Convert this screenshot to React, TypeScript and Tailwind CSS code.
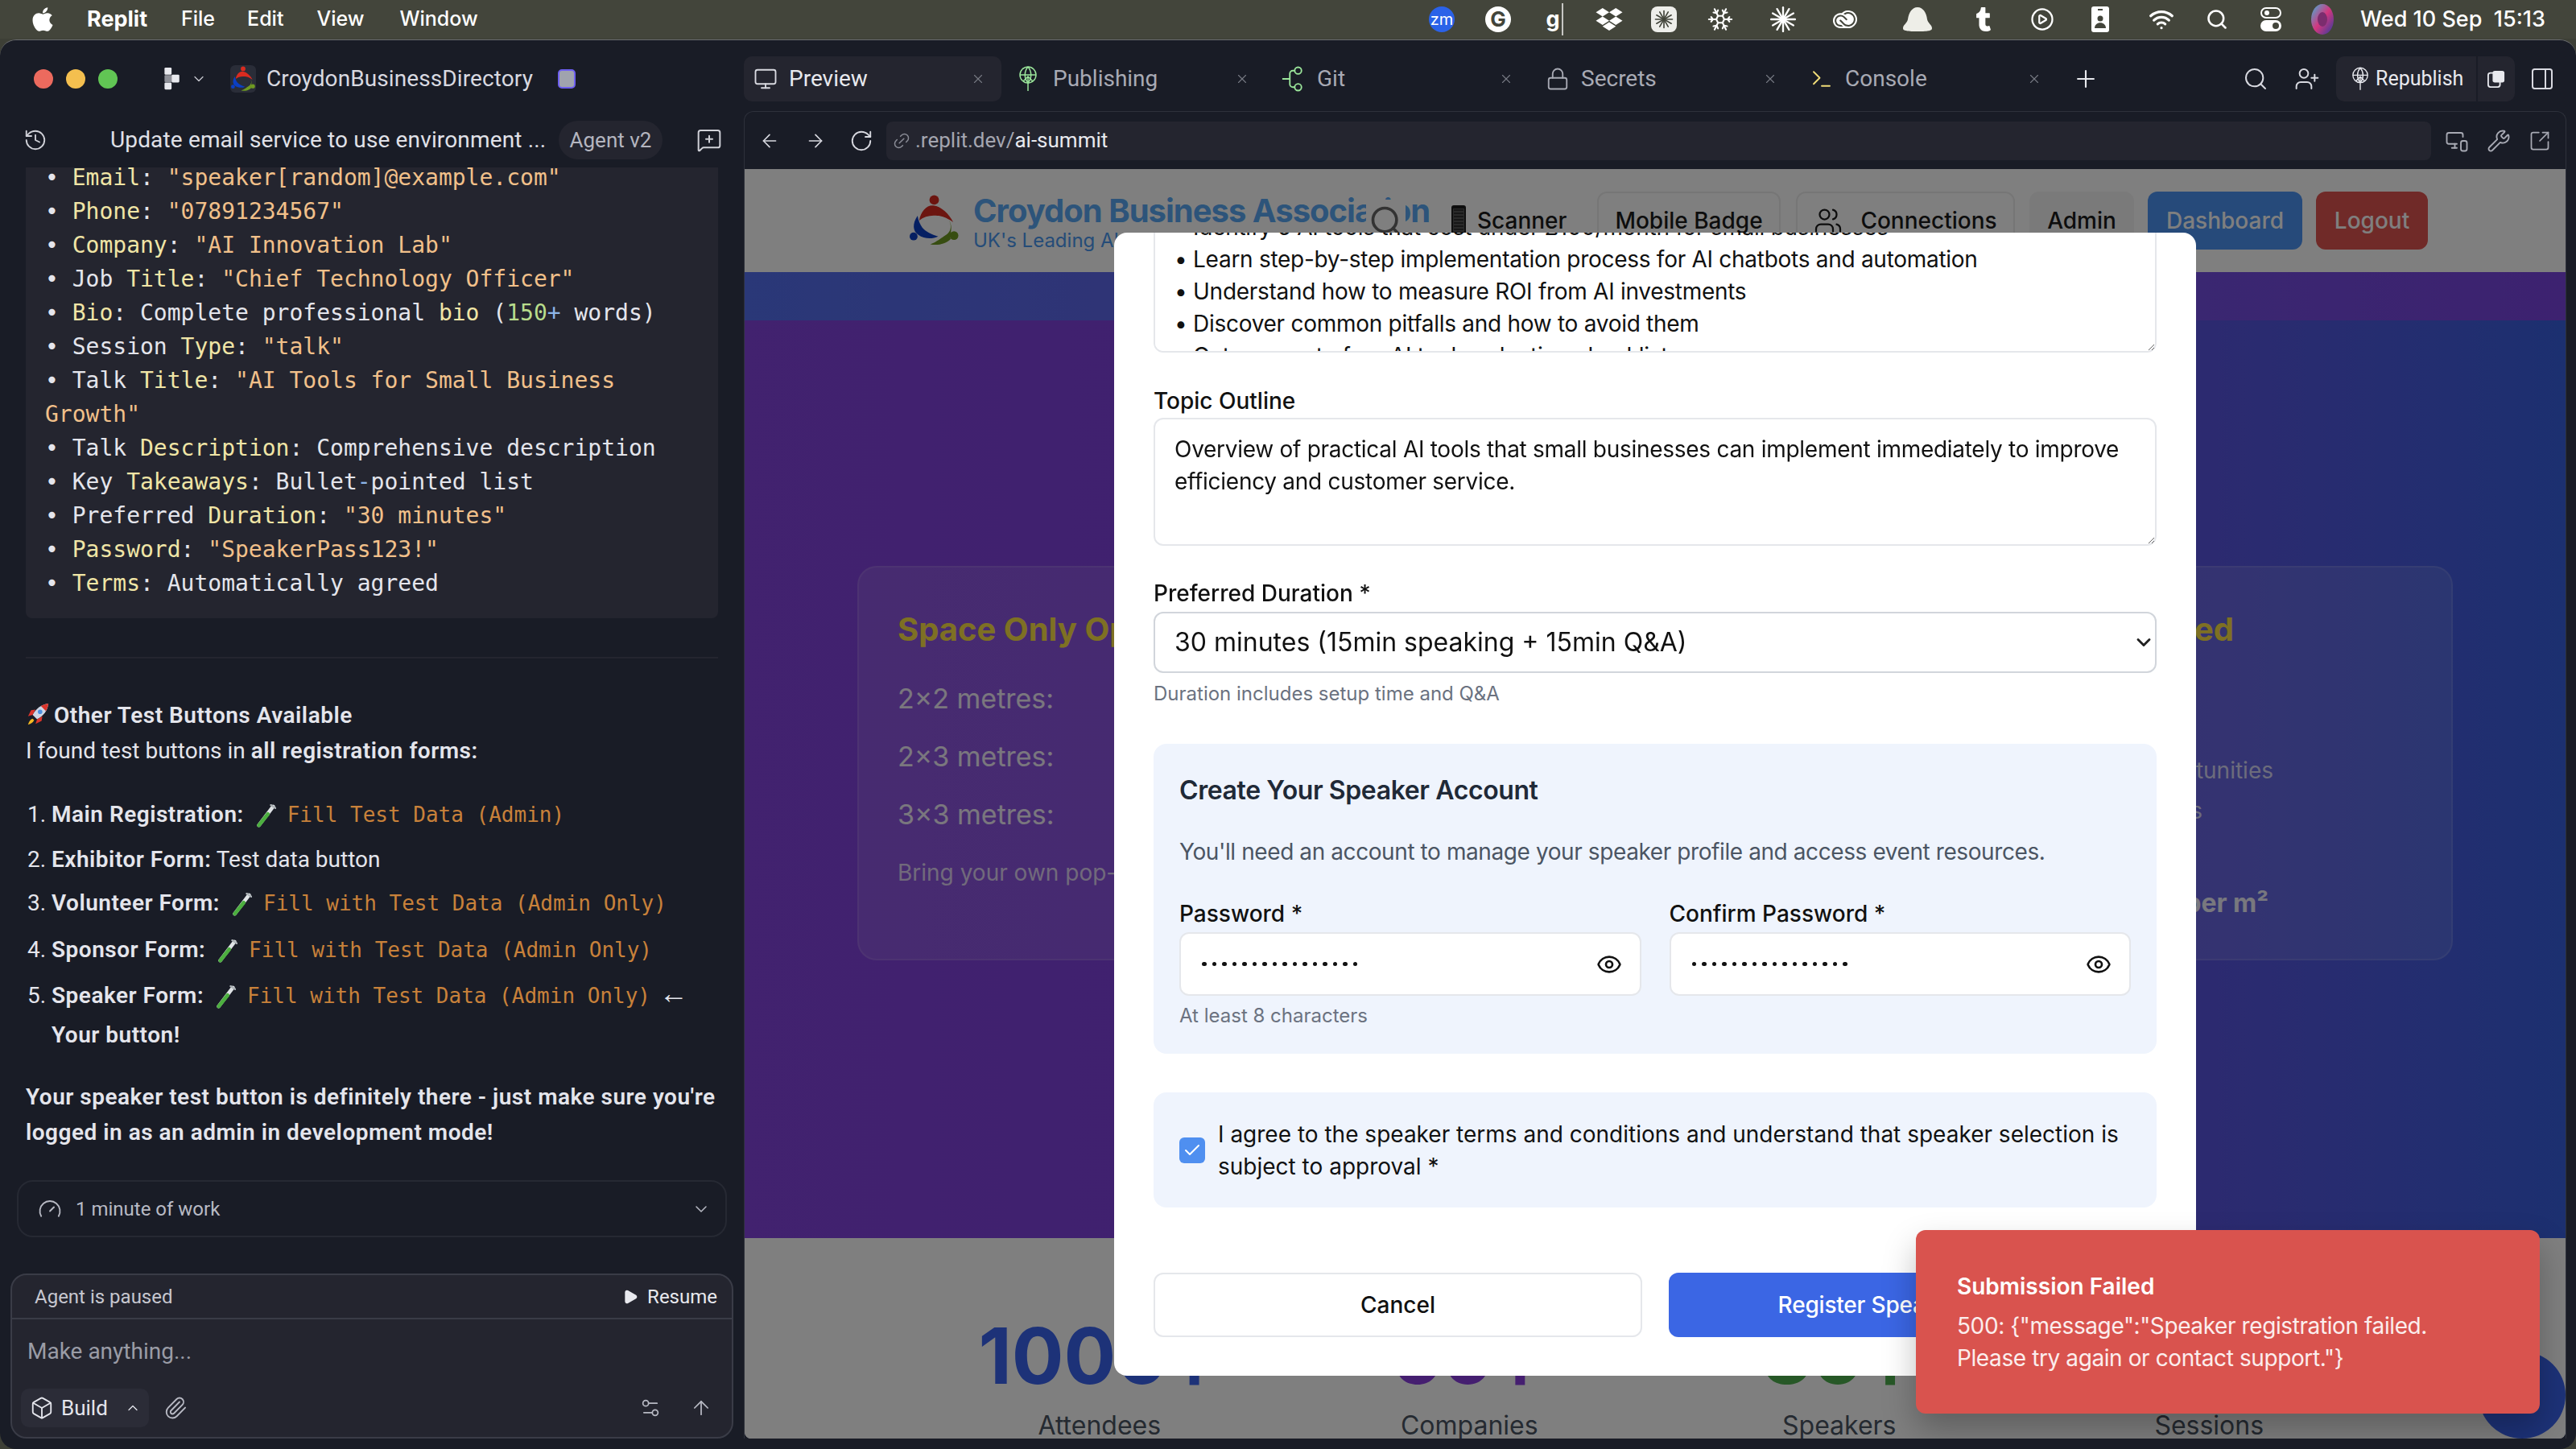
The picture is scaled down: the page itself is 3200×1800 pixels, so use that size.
import React from "react";
import {
  ArrowLeft,
  ArrowRight,
  ArrowUp,
  Box,
  Check,
  ChevronDown,
  ChevronUp,
  CirclePlay,
  Eye,
  Gauge,
  History,
  Link2,
  Lock,
  MessageSquarePlus,
  Monitor,
  MonitorSmartphone,
  PanelRight,
  Paperclip,
  Play,
  Plus,
  RotateCw,
  Search,
  Settings2,
  Snowflake,
  SquareArrowOutUpRight,
  Terminal,
  UserPlus,
  Users,
  Wifi,
  Wrench,
  X,
} from "lucide-react";
import { FaApple, FaDropbox, FaTumblr } from "react-icons/fa";
import { SiAdobecreativecloud } from "react-icons/si";

const ui = "font-[family-name:Roboto,sans-serif]";
const mono = "font-[family-name:'DejaVu_Sans_Mono',monospace]";
const inter = "font-[family-name:Inter,sans-serif]";

// ---- small drawings ----

const LogoMark = ({ className }: { className: string }) => (
  <svg viewBox="0 0 62 64" className={className}>
    <circle cx="31" cy="6" r="6" fill="#d92b20" />
    <path d="M12 32C14 20 22 12 30 13C40 14 50 24 55 34C46 28 40 26 35 26C26 25 18 27 12 32Z" fill="#d92b20" />
    <circle cx="5" cy="52" r="5" fill="#0b3fc4" />
    <path d="M10 26C3 36 4 46 11 50C18 55 28 56 36 52C28 50 20 46 16 41C13 37 11 32 10 26Z" fill="#0b3fc4" />
    <circle cx="56" cy="51" r="5.5" fill="#6f9a22" />
    <path d="M50 32C54 40 51 47 46 50C41 53 34 59 26 62C36 64 46 61 52 55C49 52 56 42 50 32Z" fill="#6f9a22" />
  </svg>
);

const ReplitMark = () => (
  <svg viewBox="0 0 22 32" className="h-[28px] w-[20px]" fill="#e8e9ee">
    <rect x="0" y="0" width="10" height="10" rx="1.5" />
    <rect x="10" y="10" width="11" height="11" rx="1.5" />
    <rect x="0" y="21" width="10" height="10" rx="1.5" />
    <rect x="0" y="10.5" width="10" height="10" rx="1.5" fill="#8e9098" />
  </svg>
);

const Burst = ({ className, color }: { className: string; color: string }) => (
  <svg viewBox="0 0 32 32" className={className} stroke={color} strokeWidth="2.2" strokeLinecap="round">
    {[0, 30, 60, 90, 120, 150].map((a) => (
      <line key={a} x1="16" y1="2" x2="16" y2="30" transform={`rotate(${a} 16 16)`} />
    ))}
  </svg>
);

const PublishIcon = ({ className }: { className: string }) => (
  <svg viewBox="0 0 24 32" className={className} fill="none" stroke="currentColor" strokeWidth="1.5">
    <circle cx="12" cy="11" r="10" />
    <path d="M2 11h20M12 1c-5 6-5 14 0 20M12 1c5 6 5 14 0 20" />
    <path d="M12 31V13M6 19l6-6 6 6" />
  </svg>
);

const GitIcon = () => (
  <svg viewBox="0 0 30 34" className="h-[32px] w-[28px] text-[#9be69b]" fill="none" stroke="currentColor" strokeWidth="2">
    <circle cx="22" cy="6" r="4.5" />
    <circle cx="22" cy="28" r="4.5" />
    <path d="M1 17h10M18 6h-3a4 4 0 0 0-4 4v14a4 4 0 0 0 4 4h3" />
  </svg>
);

const TestTube = () => (
  <svg viewBox="0 0 28 32" className="ml-[14px] mr-[14px] inline-block h-[30px] w-[26px] align-middle">
    <path d="M24 3L5 28" stroke="#dfe3e6" strokeWidth="5" strokeLinecap="round" />
    <path d="M17 13L5 28" stroke="#4caf3f" strokeWidth="5" strokeLinecap="round" />
    <path d="M21 1L27 5" stroke="#aeb4b8" strokeWidth="2.500" strokeLinecap="round" />
  </svg>
);

const Rocket = () => (
  <svg viewBox="0 0 32 32" className="mr-[5px] inline-block h-[30px] w-[30px] align-[-4px]">
    <path d="M30 2C21 3 14 8 9 17l6 6c9-5 14-12 15-21Z" fill="#cfd6e4" />
    <path d="M30 2c-4 .5-7 1.6-10 3.4L26.600 12C28.400 9 29.500 6 30 2Z" fill="#d9342b" />
    <circle cx="19" cy="13" r="3" fill="#4d8fe0" />
    <path d="M9 17l-6 2 4-8 6-1ZM15 23l-2 6 8-4 1-6Z" fill="#d9342b" />
    <path d="M9 22c-3 1-5 4-6 8 4-1 7-3 8-6Z" fill="#f5b921" />
  </svg>
);

const PhoneEmoji = () => (
  <svg viewBox="0 0 18 38" className="h-[38px] w-[18px]">
    <rect x="0" y="0" width="18" height="38" rx="3" fill="#1c1c1c" />
    <rect x="2" y="4" width="14" height="29" fill="#555" />
    <path d="M3 6h12M3 10h12M3 14h12M3 18h12M3 22h12M3 26h12M3 30h12" stroke="#222" strokeWidth="1.500" />
  </svg>
);

const Siri = () => (
  <svg viewBox="0 0 30 40" className="h-[40px] w-[30px]">
    <defs>
      <linearGradient id="siri" x1="0" y1="0" x2="1" y2="1">
        <stop offset="0" stopColor="#3fb4d8" />
        <stop offset="0.5" stopColor="#d4367e" />
        <stop offset="1" stopColor="#2d3c9e" />
      </linearGradient>
    </defs>
    <ellipse cx="15" cy="20" rx="14" ry="19" fill="url(#siri)" />
    <ellipse cx="15" cy="20" rx="6" ry="9" fill="#7b2d6e" />
  </svg>
);

// ---- mac menu bar ----

const MenuBar = () => (
  <div className={`flex h-[48px] shrink-0 items-center bg-[#43453b] text-[27px] text-white ${inter}`}>
    <FaApple className="ml-[38px] h-[34px] w-[30px]" />
    <span className="ml-[40px] font-bold">Replit</span>
    <span className="ml-[42px] text-[25px] font-medium">File</span>
    <span className="ml-[40px] text-[25px] font-medium">Edit</span>
    <span className="ml-[41px] text-[25px] font-medium">View</span>
    <span className="ml-[44px] text-[25px] font-medium">Window</span>
    <div className="ml-auto flex items-center">
      <span className="flex w-[70px] justify-center">
        <span className="flex h-[32px] w-[32px] items-center justify-center rounded-full bg-[#2b62e8] text-[20px]">zm</span>
      </span>
      <span className="flex w-[70px] justify-center">
        <span className="flex h-[32px] w-[32px] items-center justify-center rounded-full bg-white text-[26px] font-bold leading-none text-[#43453b]">G</span>
      </span>
      <span className="flex w-[70px] justify-center font-bold">
        g<span className="ml-[2px] w-[2px] bg-white/70" />
      </span>
      <span className="flex w-[66px] justify-center"><FaDropbox className="h-[32px] w-[34px]" /></span>
      <span className="flex w-[70px] justify-center">
        <span className="flex h-[32px] w-[32px] items-center justify-center rounded-[8px] bg-[#eeeeea]">
          <Burst className="h-[24px] w-[24px]" color="#43453b" />
        </span>
      </span>
      <span className="flex w-[70px] justify-center"><Snowflake className="h-[34px] w-[34px]" strokeWidth={1.5} /></span>
      <span className="flex w-[86px] justify-center"><Burst className="h-[34px] w-[34px]" color="#ffffff" /></span>
      <span className="flex w-[68px] justify-center"><SiAdobecreativecloud className="h-[30px] w-[38px]" /></span>
      <span className="flex w-[112px] justify-center">
        <svg viewBox="0 0 44 30" className="h-[30px] w-[44px]" fill="#eeeee8">
          <path d="M22 0c7 0 11 7 12 15 1 5 6 7 6 11 0 3-3 4-18 4S4 29 4 26c0-4 5-6 6-11C11 7 15 0 22 0Z" />
        </svg>
      </span>
      <span className="flex w-[52px] justify-center"><FaTumblr className="h-[30px] w-[20px]" /></span>
      <span className="flex w-[94px] justify-center"><CirclePlay className="h-[32px] w-[30px]" strokeWidth={1.8} /></span>
      <span className="flex w-[50px] justify-center">
        <svg viewBox="0 0 22 32" className="h-[32px] w-[22px]">
          <rect width="22" height="32" rx="3" fill="#fff" />
          <circle cx="11" cy="15" r="3.500" fill="#43453b" />
          <path d="M4 27c0-9 14-9 14 0Z" fill="#43453b" />
          <rect x="8" y="3" width="6" height="2" fill="#43453b" />
        </svg>
      </span>
      <span className="flex w-[102px] justify-center"><Wifi className="h-[32px] w-[36px]" strokeWidth={2.4} /></span>
      <span className="flex w-[36px] justify-center"><Search className="h-[30px] w-[28px]" strokeWidth={2.2} /></span>
      <span className="flex w-[98px] justify-center">
        <svg viewBox="0 0 26 30" className="h-[30px] w-[26px]">
          <rect x="1" y="1" width="24" height="12" rx="6" fill="none" stroke="#fff" strokeWidth="2" />
          <circle cx="8" cy="7" r="3" fill="#fff" />
          <rect x="0" y="16" width="26" height="14" rx="7" fill="#fff" />
          <circle cx="19" cy="23" r="4" fill="#43453b" />
        </svg>
      </span>
      <span className="flex w-[30px] justify-center"><Siri /></span>
      <span className="ml-[32px] mr-[38px] font-medium">Wed 10 Sep&nbsp; 15:13</span>
    </div>
  </div>
);

// ---- left column: agent chat ----

const Y = ({ children }: { children: React.ReactNode }) => <span className="text-[#f0e5a6]">{children}</span>;
const O = ({ children }: { children: React.ReactNode }) => <span className="text-[#f1c08a]">{children}</span>;

const codeLines: React.ReactNode[] = [
  <>• <Y>Email</Y>: <O>"speaker[random]@example.com"</O></>,
  <>• <Y>Phone</Y>: <O>"07891234567"</O></>,
  <>• <Y>Company</Y>: <O>"AI Innovation Lab"</O></>,
  <>• Job <Y>Title</Y>: <O>"Chief Technology Officer"</O></>,
  <>• <Y>Bio</Y>: Complete professional <Y>bio</Y> (<span className="text-[#b8dc8c]">150</span><span className="text-[#8db5e8]">+</span> words)</>,
  <>• Session <Y>Type</Y>: <O>"talk"</O></>,
  <>• Talk <Y>Title</Y>: <O>"AI Tools for Small Business</O></>,
  <O>Growth"</O>,
  <>• Talk <Y>Description</Y>: Comprehensive description</>,
  <>• Key <Y>Takeaways</Y>: Bullet<span className="text-[#8db5e8]">-</span>pointed list</>,
  <>• Preferred <Y>Duration</Y>: <O>"30 minutes"</O></>,
  <>• <Y>Password</Y>: <O>"SpeakerPass123!"</O></>,
  <>• <Y>Terms</Y>: Automatically agreed</>,
];

const InlineCode = ({ children }: { children: string }) => (
  <span className={`${mono} text-[26px] tracking-normal text-[#c8813a]`}>{children}</span>
);

const ListRow = ({ n, className, children }: { n: string; className: string; children: React.ReactNode }) => (
  <div className={`flex h-[44px] items-center pl-[2px] ${className}`}>
    <span className="w-[30px] shrink-0">{n}</span>
    <span className="whitespace-nowrap">{children}</span>
  </div>
);

const strong = "font-semibold tracking-[0.5px]";

const AgentColumn = () => (
  <div className={`flex w-[924px] shrink-0 flex-col text-[#e4e5ec] ${ui}`}>
    <div className="mt-[20px] flex h-[56px] items-center text-[28px]">
      <span className="ml-[42px] h-[24px] w-[24px] rounded-full bg-[#ec6a5e]" />
      <span className="ml-[16px] h-[24px] w-[24px] rounded-full bg-[#f4bf4f]" />
      <span className="ml-[16px] h-[24px] w-[24px] rounded-full bg-[#61c554]" />
      <span className="ml-[58px]"><ReplitMark /></span>
      <ChevronDown className="ml-[13px] h-[20px] w-[20px] text-[#c8c9d0]" strokeWidth={1.5} />
      <span className="ml-[29px] flex h-[34px] w-[32px] items-center justify-center rounded-[6px] bg-[#2a2d38]">
        <LogoMark className="h-[32px] w-[30px]" />
      </span>
      <span className="ml-[13px] tracking-[0.1px] text-[#d8d9e0]">CroydonBusinessDirectory</span>
      <span className="ml-[31px] flex h-[24px] w-[22px] items-center justify-center rounded-[5px] border-2 border-[#6e5ff0] bg-[#a0a3ae]" />
    </div>
    <div className="mt-[24px] flex h-[48px] items-center">
      <History className="ml-[29px] h-[30px] w-[30px] text-[#d0d1d8]" strokeWidth={1.5} />
      <span className="ml-[78px] w-[550px] whitespace-nowrap text-[28px] tracking-[0.15px] text-[#e0e1e8]">Update email service to use environment ...</span>
      <span className="ml-[7px] flex h-[48px] w-[129px] items-center justify-center rounded-full bg-[#24252f] text-[26px] text-[#b4b5bf]">Agent v2</span>
      <MessageSquarePlus className="ml-[42px] h-[32px] w-[32px] text-[#d0d1d8]" strokeWidth={1.5} />
    </div>
    <div className="mt-[10px] h-[626px] overflow-hidden">
      <div className={`mx-[32px] h-[560px] rounded-b-[8px] bg-[#24252f] px-[24px] text-[28px] leading-[42px] ${mono}`}>
        <div className="-translate-y-[8px]">
          {codeLines.map((line, i) => (
            <div key={i} className="whitespace-pre">{line}</div>
          ))}
        </div>
      </div>
      <div className="mx-[32px] mt-[48px] h-[2px] bg-[#24252f]" />
    </div>
    <div className="h-[648px] px-[32px] text-[28px] leading-[44px]">
      <div className={`mt-[33px] ${strong}`}><Rocket />Other Test Buttons Available</div>
      <div>I found test buttons in <b className={strong}>all registration forms:</b></div>
      <ListRow n="1." className="mt-[35px]"><b className={strong}>Main Registration:</b><TestTube /><InlineCode>Fill Test Data (Admin)</InlineCode></ListRow>
      <ListRow n="2." className="mt-[12px]"><b className={strong}>Exhibitor Form:</b> Test data button</ListRow>
      <ListRow n="3." className="mt-[10px]"><b className={strong}>Volunteer Form:</b><TestTube /><InlineCode>Fill with Test Data (Admin Only)</InlineCode></ListRow>
      <ListRow n="4." className="mt-[14px]"><b className={strong}>Sponsor Form:</b><TestTube /><InlineCode>Fill with Test Data (Admin Only)</InlineCode></ListRow>
      <ListRow n="5." className="mt-[13px]"><b className={strong}>Speaker Form:</b><TestTube /><InlineCode>Fill with Test Data (Admin Only)</InlineCode> <b className="ml-[4px] text-[36px] font-bold leading-[30px]">←</b></ListRow>
      <div className={`mt-[5px] pl-[32px] ${strong}`}>Your button!</div>
      <div className={`mt-[33px] ${strong}`}>Your speaker test button is definitely there - just make sure you're logged in as an admin in development mode!</div>
    </div>
    <div className="mx-[21px] -mt-[16px] flex h-[71px] w-[882px] shrink-0 items-center rounded-[20px] border-2 border-[#262933] text-[24px] text-[#b8bac4]">
      <Gauge className="ml-[24px] h-[30px] w-[30px]" strokeWidth={1.5} />
      <span className="ml-[17px]">1 minute of work</span>
      <ChevronDown className="ml-auto mr-[18px] h-[24px] w-[24px]" strokeWidth={1.5} />
    </div>
    <div className="ml-[13px] mt-[45px] h-[205px] w-[898px] shrink-0 rounded-[20px] border-2 border-[#3a3c47] bg-[#24252f]">
      <div className="flex h-[55px] items-center border-b-2 border-[#3a3c47] pl-[28px] pr-[18px]">
        <span className="text-[24px] text-[#c6c7cf]">Agent is paused</span>
        <Play className="ml-auto h-[20px] w-[20px] fill-[#e8e9ee] text-[#e8e9ee]" />
        <span className="ml-[11px] text-[24px] text-[#e8e9ee]">Resume</span>
      </div>
      <div className="pl-[19px] pt-[20px] text-[28px] leading-[40px] text-[#9a9ca6]">Make anything...</div>
      <div className="mt-[26px] flex items-center pl-[11px]">
        <div className="flex h-[48px] w-[159px] items-center rounded-[10px] bg-[#2b2c37] text-[26px] text-[#e4e5ec]">
          <Box className="ml-[11px] h-[32px] w-[30px]" strokeWidth={1.5} />
          <span className="ml-[9px]">Build</span>
          <ChevronUp className="ml-[21px] h-[20px] w-[20px]" strokeWidth={1.5} />
        </div>
        <Paperclip className="ml-[18px] h-[30px] w-[30px] text-[#b8bac4]" strokeWidth={1.5} />
        <Settings2 className="ml-[561px] h-[28px] w-[28px] text-[#b8bac4]" strokeWidth={1.5} />
        <ArrowUp className="ml-[35px] h-[28px] w-[28px] text-[#b8bac4]" strokeWidth={1.5} />
      </div>
    </div>
  </div>
);

// ---- tabs ----

const Tab = ({ icon, label, active }: { icon: React.ReactNode; label: string; active?: boolean }) => (
  <div className={`flex h-[56px] w-[320px] items-center rounded-[10px] pl-[12px] pr-[20px] text-[28px] ${active ? "bg-[#24252f] text-[#e8e9ee]" : "text-[#a8aab4]"}`}>
    <span className="flex w-[44px] shrink-0 justify-start">{icon}</span>
    <span>{label}</span>
    <X className="ml-auto h-[18px] w-[18px] text-[#777a84]" strokeWidth={1.5} />
  </div>
);

const TabBar = () => (
  <div className="mt-[20px] flex h-[56px] items-center gap-[8px]">
    <Tab active label="Preview" icon={<Monitor className="h-[32px] w-[30px] text-[#d8d9e0]" strokeWidth={1.5} />} />
    <Tab label="Publishing" icon={<PublishIcon className="h-[32px] w-[26px] text-[#9be69b]" />} />
    <Tab label="Git" icon={<GitIcon />} />
    <Tab label="Secrets" icon={<Lock className="h-[32px] w-[30px] text-[#a8aab4]" strokeWidth={1.5} />} />
    <Tab label="Console" icon={<Terminal className="h-[32px] w-[30px] text-[#f0dc78]" strokeWidth={1.5} />} />
    <Plus className="ml-[10px] h-[34px] w-[34px] text-[#e8e9ee]" strokeWidth={1.5} />
    <Search className="ml-[170px] h-[32px] w-[32px] text-[#d8d9e0]" strokeWidth={1.5} />
    <UserPlus className="ml-[24px] h-[32px] w-[32px] text-[#d8d9e0]" strokeWidth={1.5} />
    <div className="ml-[12px] flex h-[56px] w-[222px] items-center rounded-[10px] bg-[#24252f] text-[25px] text-[#e8e9ee]">
      <PublishIcon className="ml-[19px] h-[30px] w-[22px]" />
      <span className="ml-[8px]">Republish</span>
      <span className="ml-auto h-[56px] w-[2px] bg-[#191c26]" />
      <svg viewBox="0 0 24 24" className="mx-[12px] h-[24px] w-[22px]">
        <rect x="1" y="4" width="16" height="19" rx="3" fill="none" stroke="#e8e9ee" strokeWidth="2" />
        <rect x="7" y="1" width="16" height="16" rx="3" fill="#e8e9ee" />
      </svg>
    </div>
    <PanelRight className="ml-[10px] h-[36px] w-[32px] text-[#d8d9e0]" strokeWidth={1.5} />
  </div>
);

const UrlBar = () => (
  <div className="flex h-[71px] shrink-0 items-center">
    <ArrowLeft className="ml-[18px] h-[28px] w-[26px] text-[#d8d9e0]" strokeWidth={1.5} />
    <ArrowRight className="ml-[31px] h-[28px] w-[26px] text-[#d8d9e0]" strokeWidth={1.5} />
    <RotateCw className="ml-[29px] h-[30px] w-[30px] text-[#d8d9e0]" strokeWidth={1.5} />
    <div className="ml-[16px] flex h-[48px] w-[1919px] items-center rounded-[8px] bg-[#24252f] text-[26px]">
      <Link2 className="ml-[7px] h-[24px] w-[24px] -rotate-45 text-[#8a8c96]" strokeWidth={1.5} />
      <span className="ml-[5px] text-[#a4a6b0]">.replit.dev/</span>
      <span className="text-[#e8e9ee]">ai-summit</span>
    </div>
    <MonitorSmartphone className="ml-[17px] h-[30px] w-[30px] text-[#a8aab4]" strokeWidth={1.5} />
    <Wrench className="ml-[22px] h-[30px] w-[30px] text-[#a8aab4]" strokeWidth={1.5} />
    <SquareArrowOutUpRight className="ml-[22px] h-[28px] w-[28px] text-[#a8aab4]" strokeWidth={1.5} />
  </div>
);

// ---- page behind the dialog ----

const SiteHeader = () => (
  <div className="relative flex h-[128px] items-center bg-white pl-[205px] text-[28px] font-medium text-[#1a1a1a]">
    <LogoMark className="h-[64px] w-[61px]" />
    <div className="ml-[18px] w-[594px] shrink-0 pt-[4px]">
      <div className="whitespace-nowrap text-[40px] font-bold leading-[46px] tracking-[-0.025em] text-[#5aa9f5]">Croydon Business Association</div>
      <div className="whitespace-nowrap text-[24px] font-normal leading-[28px] text-[#4a98f0]">UK's Leading AI Business Community</div>
    </div>
    <div className="flex items-center">
      <span className="flex w-[163px] items-center gap-[14px]"><PhoneEmoji />Scanner</span>
      <span className="ml-[18px] flex h-[72px] w-[228px] items-center justify-center rounded-[12px] border-2 border-[#ececec]">Mobile Badge</span>
      <span className="ml-[19px] flex h-[72px] w-[272px] items-center justify-center gap-[22px] rounded-[12px] border-2 border-[#ececec]">
        <Users className="h-[36px] w-[36px]" strokeWidth={1.5} />Connections
      </span>
      <span className="ml-[18px] flex h-[72px] w-[130px] items-center justify-center rounded-[12px] bg-[#f4f4f4]">Admin</span>
      <span className="ml-[17px] flex h-[72px] w-[192px] items-center justify-center rounded-[12px] bg-[#4c94f4] text-white">Dashboard</span>
      <span className="ml-[17px] flex h-[72px] w-[139px] items-center justify-center rounded-[12px] bg-[#e05450] text-white">Logout</span>
    </div>
    <div className="absolute left-[772px] top-[38px] flex h-[64px] w-[49px] justify-center bg-white pt-[4px]">
      <Search className="h-[46px] w-[44px] text-[#666]" strokeWidth={2} />
    </div>
  </div>
);

const Stat = ({ value, label, color }: { value: string; label: string; color: string }) => (
  <div className="flex flex-col items-center">
    <div className={`text-[96px] font-bold leading-[96px] ${color}`}>
      {value}<span className="inline-block translate-y-[5px]">+</span>
    </div>
    <div className="mt-[15px] text-[32px] leading-[48px] text-[#4b5563]">{label}</div>
  </div>
);

const SitePage = () => (
  <div className={`h-full ${inter}`}>
    <SiteHeader />
    <div className="h-[60px] bg-gradient-to-r from-[#5470f0] to-[#7a44e0]" />
    <div className="h-[1140px] bg-gradient-to-r from-[#8444de] via-[#7a3ee0] to-[#3860e0] px-[140px] pt-[305px]">
      <div className="grid grid-cols-2 gap-[48px]">
        <div className="h-[490px] rounded-[24px] border-2 border-white/10 bg-white/10 px-[48px] pt-[50px] text-white">
          <div className="text-[40px] font-bold leading-[54px] text-[#fde047]">Space Only Options</div>
          <div className="mt-[42px] space-y-[38px] text-[34px] leading-[34px] text-white/90">
            <div>2×2 metres:</div>
            <div>2×3 metres:</div>
            <div>3×3 metres:</div>
          </div>
          <div className="mt-[35px] text-[28px] leading-[40px] text-white/75">Bring your own pop-up stand and materials</div>
        </div>
        <div className="h-[490px] rounded-[24px] border-2 border-white/10 bg-white/10 pl-[48px] text-white">
          <div className="w-[645px] pt-[50px] text-right text-[40px] font-bold leading-[54px] text-[#fde047]">Package Included</div>
          <div className="mt-[128px] w-[694px] text-right text-[28px] leading-[40px] text-white/75">Networking opportunities</div>
          <div className="mt-[10px] w-[606px] text-right text-[28px] leading-[40px] text-white/75">Materials</div>
          <div className="mt-[75px] w-[688px] text-right text-[32px] font-bold leading-[40px] text-white/90">per m²</div>
        </div>
      </div>
    </div>
    <div className="grid h-[249px] grid-cols-4 overflow-hidden bg-white pl-[211px] pr-[213px] pt-[98px]">
      <Stat value="1000" label="Attendees" color="text-[#3b64f0]" />
      <Stat value="50" label="Companies" color="text-[#8a3fe0]" />
      <Stat value="30" label="Speakers" color="text-[#4fb04f]" />
      <Stat value="25" label="Sessions" color="text-[#3b64f0]" />
    </div>
    <div className="absolute bottom-0 right-0 h-[108px] w-[108px] rounded-full bg-[#3b64f0]" />
  </div>
);

// ---- dialog ----

const fieldLabel = "h-[40px] text-[28px] font-medium leading-[40px] text-[#111]";
const textArea = "block w-full rounded-[12px] border-2 border-[#e5e7eb] bg-white px-[24px] text-[28px] leading-[40px] tracking-[-0.28px] text-[#111] outline-none";

const goals = [
  "• Identify 5 AI tools that cost under £100/month for small businesses",
  "• Learn step-by-step implementation process for AI chatbots and automation",
  "• Understand how to measure ROI from AI investments",
  "• Discover common pitfalls and how to avoid them",
  "• Get access to free AI tool evaluation checklist",
].join("\n");

const PasswordField = ({ label }: { label: string }) => (
  <div>
    <div className={fieldLabel}>{label}</div>
    <div className="mt-[3px] flex h-[79px] items-center rounded-[12px] border-2 border-[#e5e7eb] bg-white pl-[26px] pr-[22px]">
      <div className="flex gap-[7px]">
        {Array.from({ length: 16 }).map((_, i) => (
          <span key={i} className="h-[5.500px] w-[5.500px] rounded-full bg-[#111]" />
        ))}
      </div>
      <Eye className="ml-auto h-[32px] w-[32px] text-[#111]" strokeWidth={2} />
    </div>
  </div>
);

const SpeakerDialog = () => (
  <div className={`absolute left-[459px] top-[79px] h-[1420px] w-[1344px] overflow-hidden rounded-[16px] bg-white px-[49px] ${inter}`}>
    <textarea readOnly defaultValue={goals} className={`${textArea} -mt-[51px] h-[200px] pt-[22px]`} />
    <div className={`${fieldLabel} mt-[40px]`}>Topic Outline</div>
    <textarea
      readOnly
      defaultValue="Overview of practical AI tools that small businesses can implement immediately to improve efficiency and customer service."
      className={`${textArea} mt-[1px] h-[159px] pt-[17px]`}
    />
    <div className={`${fieldLabel} mt-[39px]`}>Preferred Duration *</div>
    <div className="mt-[3px] flex h-[76px] items-center rounded-[12px] border-2 border-[#d1d5db] pl-[24px] text-[32px] text-[#111]">
      30 minutes (15min speaking + 15min Q&amp;A)
      <ChevronDown className="ml-auto h-[28px] w-[28px] text-[#222]" strokeWidth={2.5} />
    </div>
    <div className="mt-[10px] text-[24px] leading-[32px] text-[#6b7280]">Duration includes setup time and Q&amp;A</div>
    <div className="mt-[46px] h-[385px] rounded-[16px] bg-[#eff4fd] px-[32px] pt-[38px]">
      <div className="text-[32px] font-semibold leading-[40px] tracking-[-0.4px] text-[#1f2937]">Create Your Speaker Account</div>
      <div className="mt-[36px] text-[28px] leading-[40px] tracking-[-0.41px] text-[#4b5563]">You'll need an account to manage your speaker profile and access event resources.</div>
      <div className="mt-[37px] grid grid-cols-2 gap-[35px] pr-0">
        <PasswordField label="Password *" />
        <PasswordField label="Confirm Password *" />
      </div>
      <div className="mt-[9px] text-[24px] leading-[32px] text-[#6b7280]">At least 8 characters</div>
    </div>
    <div className="mt-[48px] flex h-[143px] items-center rounded-[16px] bg-[#eff4fd] pl-[32px] pr-[40px]">
      <span className="flex h-[32px] w-[32px] shrink-0 items-center justify-center rounded-[6px] bg-[#4f8ff0]">
        <Check className="h-[24px] w-[24px] text-white" strokeWidth={2} />
      </span>
      <span className="ml-[16px] text-[28px] leading-[40px] text-[#111]">I agree to the speaker terms and conditions and understand that speaker selection is subject to approval *</span>
    </div>
    <div className="mt-[81px] flex gap-[33px]">
      <button className="h-[80px] w-[607px] rounded-[12px] border-2 border-[#e5e7eb] bg-white text-[28px] font-medium text-[#111]">Cancel</button>
      <button className="h-[80px] w-[606px] rounded-[12px] bg-[#3b66e4] pl-[8px] text-[28px] font-medium tracking-[-0.2px] text-white">Register Speaker Account</button>
    </div>
  </div>
);

const ErrorToast = () => (
  <div className={`absolute bottom-[31px] right-[32px] h-[228px] w-[775px] rounded-[12px] bg-[#d9534e] px-[51px] pt-[50px] text-white shadow-[0_20px_40px_rgba(0,0,0,0.25)] ${inter}`}>
    <div className="text-[28px] font-semibold leading-[40px]">Submission Failed</div>
    <div className="mt-[9px] text-[28px] leading-[40px] tracking-[-0.4px] text-white/90">
      500: {'{"message":"Speaker registration failed.'}<br />Please try again or contact support."{"}"}
    </div>
  </div>
);

export default function App() {
  return (
    <div className="flex h-[1800px] w-[3200px] flex-col overflow-hidden bg-[#3d3f36]">
      <MenuBar />
      <div className="mt-[1px] flex h-[1751px] shrink-0 overflow-hidden rounded-[20px] border-t border-[#6a6c70] bg-[#191c26]">
        <AgentColumn />
        <div className={`flex w-[2264px] flex-col ${ui}`}>
          <TabBar />
          <div className="mt-[12px] flex h-[1649px] w-[2264px] flex-col overflow-hidden rounded-t-[12px] border border-b-0 border-[#2e313b]">
            <UrlBar />
            <div className="relative flex-1 overflow-hidden rounded-b-[8px]">
              <SitePage />
              <div className="absolute inset-0 bg-black/50" />
              <SpeakerDialog />
              <ErrorToast />
            </div>
          </div>
        </div>
      </div>
    </div>
  );
}
